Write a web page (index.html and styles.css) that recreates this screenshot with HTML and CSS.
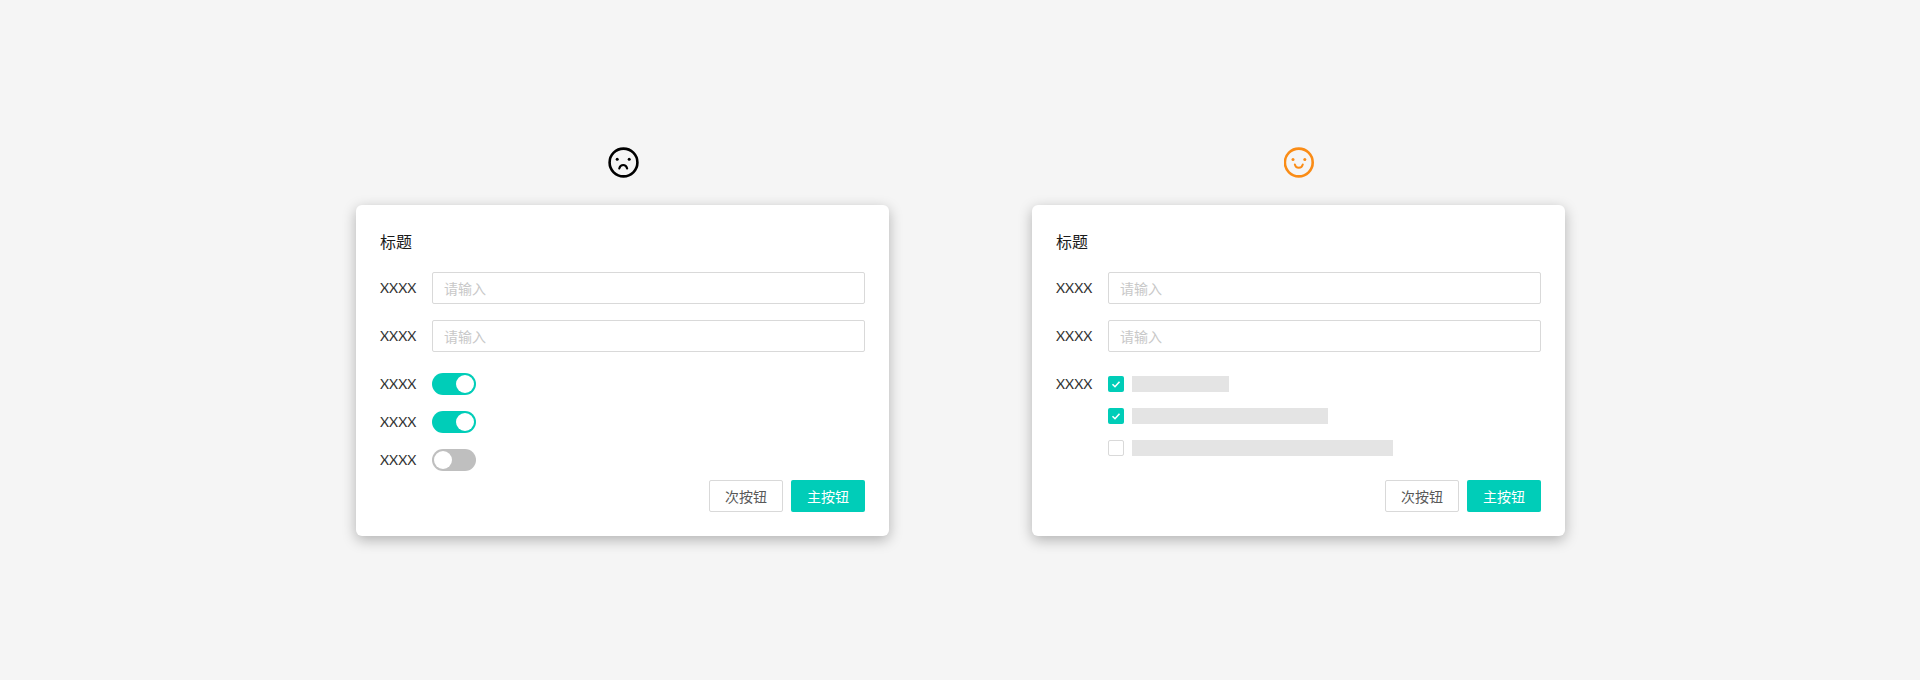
FILE: index.html
```html
<!DOCTYPE html>
<html lang="zh-CN">
<head>
  <meta charset="UTF-8">
  <title>弹窗对比</title>
  <link rel="stylesheet" href="styles.css">
</head>
<body>
  <div class="compare">
    <!-- Don't: switches -->
    <section class="sample">
      <svg class="face" viewBox="0 0 32 32" fill="none" stroke="#000" stroke-width="2.6">
        <circle cx="15.5" cy="15.5" r="13.9"/>
        <circle class="eye-black" cx="9.2" cy="12.3" r="1.5"/>
        <circle class="eye-black" cx="21.2" cy="12.3" r="1.5"/>
        <path d="M11.2 21.6c.7-2.400 2.200-3.500 4-3.500s3.300 1.100 4 3.500" stroke-width="2" stroke-linecap="round"/>
      </svg>
      <div class="card">
        <h2>标题</h2>
        <div class="row">
          <label>XXXX</label>
          <input type="text" placeholder="请输入">
        </div>
        <div class="row">
          <label>XXXX</label>
          <input type="text" placeholder="请输入">
        </div>
        <div class="switches">
          <div class="switch-row"><label>XXXX</label><span class="switch on"></span></div>
          <div class="switch-row"><label>XXXX</label><span class="switch on"></span></div>
          <div class="switch-row"><label>XXXX</label><span class="switch"></span></div>
        </div>
        <div class="footer tight">
          <button class="btn">次按钮</button>
          <button class="btn primary">主按钮</button>
        </div>
      </div>
    </section>

    <!-- Do: checkboxes -->
    <section class="sample">
      <svg class="face" viewBox="0 0 32 32" fill="none" stroke="#fa8c16" stroke-width="2.6">
        <circle cx="14.8" cy="15.5" r="13.9"/>
        <circle class="eye-orange" cx="9" cy="12.600" r="1.500"/>
        <circle class="eye-orange" cx="20.800" cy="12.600" r="1.500"/>
        <path d="M10.800 17.400c.5 2.300 2 3.400 4 3.400s3.500-1.100 4-3.400" stroke-width="2" stroke-linecap="round"/>
      </svg>
      <div class="card">
        <h2>标题</h2>
        <div class="row">
          <label>XXXX</label>
          <input type="text" placeholder="请输入">
        </div>
        <div class="row">
          <label>XXXX</label>
          <input type="text" placeholder="请输入">
        </div>
        <div class="checks">
          <label>XXXX</label>
          <div class="check-list">
            <div class="check-item">
              <span class="check on">
                <svg viewBox="0 0 16 16" fill="none" stroke="#fff" stroke-width="1.600"><path d="M4.500 8.200l2.500 2.500 4.500-5"/></svg>
              </span>
              <span class="bar bar-short"></span>
            </div>
            <div class="check-item">
              <span class="check on">
                <svg viewBox="0 0 16 16" fill="none" stroke="#fff" stroke-width="1.600"><path d="M4.500 8.200l2.500 2.500 4.500-5"/></svg>
              </span>
              <span class="bar bar-mid"></span>
            </div>
            <div class="check-item">
              <span class="check"></span>
              <span class="bar bar-long"></span>
            </div>
          </div>
        </div>
        <div class="footer">
          <button class="btn">次按钮</button>
          <button class="btn primary">主按钮</button>
        </div>
      </div>
    </section>
  </div>
</body>
</html>
```

FILE: styles.css
```css
* {
  box-sizing: border-box;
}
body {
  margin: 0;
  height: 680px;
  overflow: hidden;
  background: #f5f5f5;
  color: #333;
  font-family: "Lato", "Noto Sans CJK SC", sans-serif;
  font-size: 14px;
}
.compare {
  display: flex;
  justify-content: center;
  gap: 143px;
  padding: 147px 0 0 1px;
}
.sample {
  display: flex;
  flex-direction: column;
  align-items: center;
  width: 533px;
}
.face {
  display: block;
  width: 32px;
  height: 32px;
  margin: 0 0 26px 3px;
}
.eye-black {
  fill: #000;
  stroke: none;
}
.eye-orange {
  fill: #fa8c16;
  stroke: none;
}
.card {
  width: 100%;
  height: 331px;
  padding: 24px;
  background: #fff;
  border-radius: 6px;
  box-shadow: 0 4px 14px rgba(0,0,0,0.28);
}
h2 {
  margin: 0 0 19px;
  font-size: 16px;
  font-weight: 400;
  line-height: 24px;
  color: #1a1a1a;
  font-family: "Noto Sans CJK SC", sans-serif;
}
label {
  flex: none;
  width: 52px;
  line-height: 22px;
}
.row {
  display: flex;
  align-items: center;
  margin-bottom: 16px;
}
.row input {
  flex: 1;
  height: 32px;
  padding: 0 11px;
  border: 1px solid #d9d9d9;
  border-radius: 2px;
  font: inherit;
  font-family: "Noto Sans CJK SC", sans-serif;
  outline: none;
}
.row input::placeholder {
  color: #c8c8c8;
}
.switches {
  display: flex;
  flex-direction: column;
  gap: 16px;
  margin-top: 21px;
}
.switch-row {
  display: flex;
  align-items: center;
}
.switch {
  display: block;
  width: 44px;
  height: 22px;
  padding: 2px;
  border-radius: 11px;
  background: #bfbfbf;
}
.switch::after {
  content: "";
  display: block;
  width: 18px;
  height: 18px;
  border-radius: 50%;
  background: #fff;
}
.switch.on {
  background: #00cdb8;
}
.switch.on::after {
  margin-left: auto;
}
.checks {
  display: flex;
  margin-top: 24px;
}
.checks label {
  margin-top: -3px;
}
.check-list {
  display: flex;
  flex-direction: column;
  gap: 16px;
}
.check-item {
  display: flex;
  gap: 8px;
}
.check {
  display: block;
  width: 16px;
  height: 16px;
  border: 1px solid #d9d9d9;
  border-radius: 2px;
  background: #fff;
}
.check.on {
  border: none;
  background: #00cdb8;
}
.check svg {
  display: block;
  width: 16px;
  height: 16px;
}
.bar {
  display: block;
  height: 16px;
  background: #e4e4e4;
}
.bar-short {
  width: 97px;
}
.bar-mid {
  width: 196px;
}
.bar-long {
  width: 261px;
}
.footer {
  display: flex;
  justify-content: flex-end;
  gap: 8px;
  margin-top: 24px;
}
.footer.tight {
  margin-top: 9px;
}
.btn {
  width: 74px;
  height: 32px;
  padding: 0;
  border: 1px solid #d9d9d9;
  border-radius: 2px;
  background: #fff;
  color: #595959;
  font-family: "Noto Sans CJK SC", sans-serif;
  font-size: 14px;
}
.btn.primary {
  border: none;
  background: #00cdb8;
  color: #fff;
}
```
